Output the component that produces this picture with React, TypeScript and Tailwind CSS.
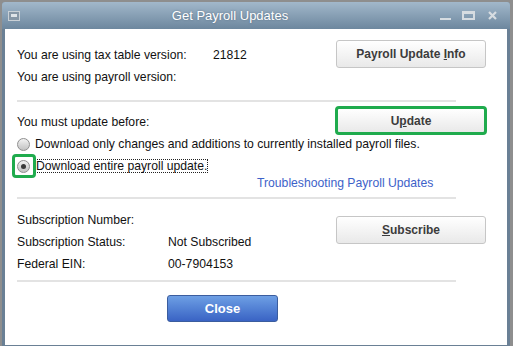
import React from "react";

function Btn({ children, className = "" }: { children: React.ReactNode; className?: string }) {
  return (
    <button
      className={`flex h-[28px] w-[150px] items-center justify-center rounded-[3px] border border-[#c6c6c6] bg-gradient-to-b from-white to-[#e9e9e9] text-[12px] font-bold text-[#3c3c3c] ${className}`}
    >
      <span>{children}</span>
    </button>
  );
}

function Radio({ checked }: { checked?: boolean }) {
  return (
    <span className="flex h-[13px] w-[13px] shrink-0 items-center justify-center rounded-full border border-[#8f8f8f] bg-gradient-to-b from-[#f2f2f2] to-[#c2c2c2]">
      {checked && <span className="h-[5px] w-[5px] rounded-full bg-[#3a3a3a]" />}
    </span>
  );
}

function Sep() {
  return <div className="h-[2px] w-[439px] bg-[#e3e3e3]" />;
}

export default function App() {
  return (
    <div className="h-[346px] w-[513px] bg-[#8e8e8e] pl-[2px] pt-[2px] font-['Liberation_Sans',Arial,sans-serif] text-[12.2px] text-[#111]">
      <div className="flex h-[344px] w-[508px] flex-col rounded-t-[3px] bg-[#6a8095]">
        {/* title bar */}
        <div className="flex h-[27px] items-center rounded-t-[3px] bg-gradient-to-b from-[#a2b8cb] to-[#6d879e] pl-[6px] pr-[13px]">
          <span className="flex h-[10px] w-[12px] items-center justify-center border border-[#c9d0d6] bg-[#8797a6]">
            <span className="h-[3px] w-[6px] bg-[#dfe4e8]" />
          </span>
          <div className="flex-1 text-center text-[13px] text-white [text-shadow:0_0_2px_rgba(60,80,100,0.6)]">
            Get Payroll Updates
          </div>
          <div className="flex items-center gap-[11px]">
            <span className="mt-[7px] h-[2px] w-[11px] bg-[#d6dce1]" />
            <span className="h-[9px] w-[13px] border-2 border-t-[3px] border-[#d6dce1]" />
            <svg width="9" height="9" viewBox="0 0 9 9" className="ml-[2px]">
              <path d="M1 1 L8 8 M8 1 L1 8" stroke="#d6dce1" strokeWidth="2.2" />
            </svg>
          </div>
        </div>

        {/* body */}
        <div className="mx-[3px] mb-[1px] flex-1 bg-white pl-[12px] pr-[21px]">
          {/* versions */}
          <div className="flex h-[71px] items-start">
            <div className="pt-[15px] leading-[22px]">
              <div className="flex">
                <span className="w-[196px]">You are using tax table version:</span>
                <span>21812</span>
              </div>
              <div>You are using payroll version:</div>
            </div>
            <Btn className="ml-auto mt-[11px]">
              Payroll Update <span className="underline">I</span>nfo
            </Btn>
          </div>
          <Sep />

          {/* update */}
          <div className="flex h-[31px] items-start">
            <div className="pt-[9px] leading-[22px]">You must update before:</div>
            <button className="ml-auto mr-[-1px] mt-[4px] flex h-[29px] w-[152px] items-center justify-center rounded-[4px] border-[3px] border-[#1fab4d] bg-gradient-to-b from-white to-[#e9e9e9] text-[12px] font-bold text-[#3c3c3c]">
              <span>
                U<span className="underline">p</span>date
              </span>
            </button>
          </div>
          <div className="flex h-[22px] items-center gap-[5px]">
            <Radio />
            <span>Download only changes and additions to currently installed payroll files.</span>
          </div>
          <div className="flex h-[22px] items-center gap-[5px]">
            <span className="relative">
              <Radio checked />
              <span className="absolute -left-[5px] -top-[6px] h-[24px] w-[24px] rounded-[4px] border-[3px] border-[#1fab4d]" />
            </span>
            <span className="border border-dotted border-[#222] leading-[12px]">Download entire payroll update.</span>
          </div>
          <div className="-mt-[2px] h-[16px] pl-[240px] leading-[16px] text-[#3d62c9]">
            Troubleshooting Payroll Updates
          </div>
          <div className="h-[6px]" />
          <Sep />

          {/* subscription */}
          <div className="flex items-start">
            <div className="pt-[10px] leading-[22px]">
              <div>Subscription Number:</div>
              <div className="flex">
                <span className="w-[151px]">Subscription Status:</span>
                <span>Not Subscribed</span>
              </div>
              <div className="flex">
                <span className="w-[151px]">Federal EIN:</span>
                <span>00-7904153</span>
              </div>
            </div>
            <Btn className="ml-auto mt-[17px]">
              <span className="underline">S</span>ubscribe
            </Btn>
          </div>
          <div className="h-[5px]" />
          <Sep />

          <button className="ml-[150px] mt-[13px] flex h-[27px] w-[111px] items-center justify-center rounded-[3px] border border-[#3b5d9e] bg-gradient-to-b from-[#6e9fe4] to-[#3a63c4] text-[13px] font-bold text-white">
            Close
          </button>
        </div>
      </div>
    </div>
  );
}
